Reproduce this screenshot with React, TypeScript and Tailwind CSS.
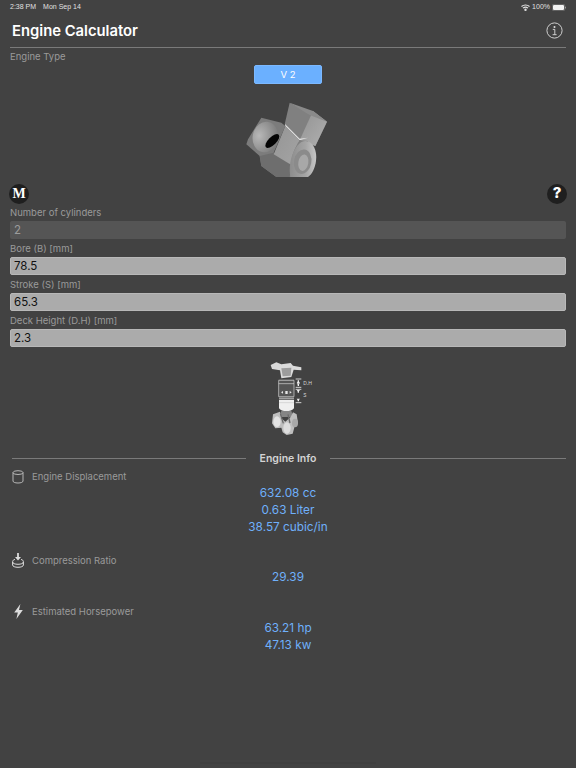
import React from "react";

function Wifi() {
  return (
    <svg width="9" height="7" viewBox="0 0 18 14" fill="none" stroke="#e5e5e5" strokeWidth="2.4">
      <path d="M1 5c4.5-4 11.5-4 16 0" />
      <path d="M4 8.2c3-2.6 7-2.6 10 0" />
      <path d="M7 11c1.2-1 2.8-1 4 0" />
      <circle cx="9" cy="12.4" r="0.8" fill="#e5e5e5" />
    </svg>
  );
}

function Battery() {
  return (
    <svg width="14" height="7" viewBox="0 0 14 7">
      <rect x="0.25" y="0.25" width="12.5" height="6.5" rx="1.6" fill="none" stroke="#9a9a9a" strokeWidth="0.5" />
      <rect x="1" y="1" width="11" height="5" rx="1" fill="#f2f2f2" />
      <rect x="13" y="2.4" width="1" height="2.2" rx="0.5" fill="#9a9a9a" />
    </svg>
  );
}

function EngineImage() {
  return (
    <svg width="120" height="100" viewBox="0 0 360 300" className="block">
      <defs>
        <radialGradient id="bore" cx="0.25" cy="0.5" r="0.85">
          <stop offset="0" stopColor="#b8b8b8" />
          <stop offset="1" stopColor="#747474" />
        </radialGradient>
        <linearGradient id="rightf" x1="0" y1="0" x2="1" y2="1">
          <stop offset="0" stopColor="#929292" />
          <stop offset="1" stopColor="#b0b0b0" />
        </linearGradient>
        <linearGradient id="frontf" x1="0" y1="0" x2="1" y2="1">
          <stop offset="0" stopColor="#959595" />
          <stop offset="1" stopColor="#a4a4a4" />
        </linearGradient>
        <linearGradient id="flange" x1="0" y1="0" x2="1" y2="0">
          <stop offset="0" stopColor="#8c8c8c" />
          <stop offset="0.6" stopColor="#a5a5a5" />
          <stop offset="1" stopColor="#c6c6c6" />
        </linearGradient>
      </defs>
      <path d="M100 80L160 95L172 105L137 185L190 222L185 258H145L100 225L95 195L55 160L60 145Z" fill="#7c7c7c" />
      <path d="M95 195L137 185L190 222L185 258H145L100 225Z" fill="#6e6e6e" />
      <ellipse cx="112" cy="138" rx="38" ry="46" transform="rotate(12 112 138)" fill="url(#bore)" />
      <ellipse cx="133" cy="150" rx="12" ry="27" transform="rotate(45 133 150)" fill="#050505" />
      <path d="M185 35L297 92L262 165L215 148L170 100Z" fill="#808080" />
      <path d="M255 60L297 92L262 165L215 148Z" fill="url(#rightf)" />
      <path d="M185 35L255 60L297 92L245 72Z" fill="#8a8a8a" />
      <path d="M172 105L215 148L190 222L137 190Z" fill="url(#frontf)" />
      <path d="M171 99L215 143L240 140L215 148L172 105Z" fill="#e4e4e4" />
      <path d="M215 148C200 170 188 200 190 222L185 258H240V150Z" fill="#808080" />
      <path d="M187 258C178 205 205 150 232 150C256 150 268 180 264 210C261 232 252 250 240 258Z" fill="url(#flange)" />
      <ellipse cx="224" cy="212" rx="26" ry="37" transform="rotate(10 224 212)" fill="#8b8b8b" />
      <ellipse cx="226" cy="215" rx="15" ry="25" transform="rotate(10 226 215)" fill="#a8a8a8" />
    </svg>
  );
}

function Diagram() {
  return (
    <svg width="80" height="85" viewBox="0 0 240 255" className="block">
      <path d="M68 30L85 22L100 28L128 24L135 32L160 37V46L137 44L130 66L100 70L96 46L72 42Z" fill="#dadada" />
      <path d="M100 40L130 38L128 62L104 64Z" fill="#9c9c9c" />
      <path d="M92 72H138V125H92Z" fill="#555555" />
      <path d="M92 76H138M92 86H138M92 125H138M92 76V125M138 76V125" stroke="#d8d8d8" strokeWidth="2" />
      <path d="M99 112L105 108V116ZM131 112L125 108V116Z" fill="#e6e6e6" />
      <rect x="112" y="108" width="7" height="9" fill="#e6e6e6" />
      <rect x="93" y="128" width="45" height="3" fill="#cfcfcf" />
      <path d="M93 134H138V160C130 172 100 172 93 160Z" fill="#efefef" />
      <path d="M93 143H138" stroke="#bdbdbd" strokeWidth="1.5" />
      <path d="M100 168H130L136 186H94Z" fill="#858585" />
      <path d="M75 178L96 170L100 190L112 200L128 186L135 172L146 178L150 205L140 214L134 236L116 240L104 232L100 218L82 220L72 205Z" fill="#bebebe" />
      <ellipse cx="87" cy="200" rx="11" ry="16" fill="#e3e3e3" />
      <ellipse cx="117" cy="219" rx="11" ry="17" fill="#dedede" />
      <ellipse cx="141" cy="204" rx="9" ry="13" fill="#a8a8a8" />
      <path d="M97 176L106 205M120 178L126 204" stroke="#6b6b6b" strokeWidth="4" />
      <path d="M143 72H160M143 97H160M143 103H160M143 143H160" stroke="#f0f0f0" strokeWidth="2.5" />
      <path d="M151 76V82M151 93V87M151 107V113M151 139V132" stroke="#f0f0f0" strokeWidth="4" />
      <path d="M146 84H156L151 78ZM146 85H156L151 91ZM146 105H156L151 111ZM146 131H156L151 137Z" fill="#f0f0f0" />
      <text x="166" y="91" fontSize="15" fill="#d8d8d8" fontFamily="Inter, sans-serif">D.H</text>
      <text x="166" y="126" fontSize="15" fill="#d8d8d8" fontFamily="Inter, sans-serif">S</text>
    </svg>
  );
}

function Cylinder() {
  return (
    <svg width="12" height="14" viewBox="0 0 12 14" fill="none" stroke="#c4c4c4" strokeWidth="0.9">
      <ellipse cx="6" cy="2.6" rx="5" ry="1.9" />
      <path d="M1 2.6v8.4c0 1.2 2 2 5 2s5-.8 5-2V2.6" />
    </svg>
  );
}

function Compression() {
  return (
    <svg width="12" height="15" viewBox="0 0 12 15" fill="none" stroke="#dcdcdc" strokeWidth="1">
      <path d="M6 0v5.6" strokeWidth="1.8" />
      <path d="M3 4H9L6 7.6Z" fill="#dcdcdc" stroke="none" />
      <path d="M3 6.4C1.6 6.8.6 7.5.6 8.6v3.4c0 1.4 2.4 2.3 5.4 2.3s5.4-.9 5.4-2.3V8.6c0-1.1-1-1.8-2.4-2.2" />
      <path d="M.6 9c0 1.4 2.4 2.3 5.4 2.3s5.4-.9 5.4-2.3" />
    </svg>
  );
}

function Bolt() {
  return (
    <svg width="9" height="15" viewBox="0 0 9 15">
      <path d="M6.4 0L0.2 8.4H3.8L2.4 15L8.8 6H5Z" fill="#dcdcdc" />
    </svg>
  );
}

function Field({ label, value, disabled }: { label: string; value: string; disabled?: boolean }) {
  return (
    <div>
      <div className="h-[18px] pt-[1px] text-[9.5px] leading-[17px] text-[#9a9a9a]">{label}</div>
      <div
        className={
          disabled
            ? "h-[18px] rounded-[2px] bg-[#555555] pl-[4px] text-[11.5px] leading-[18px] text-[#9c9c9c]"
            : "h-[18px] rounded-[2px] border border-[#b8b8b8] bg-[#ababab] pl-[3px] text-[11.5px] leading-[16px] text-[#111111]"
        }
      >
        {value}
      </div>
    </div>
  );
}

function InfoRow({ icon, label, values, className }: { icon: React.ReactNode; label: string; values: string[]; className: string }) {
  return (
    <div className={className}>
      <div className="flex h-[16px] items-center pl-[2px]">
        <span className="flex w-[12px] justify-center">{icon}</span>
        <span className="ml-[8px] pt-[1px] text-[9.5px] text-[#9a9a9a]">{label}</span>
      </div>
      <div className="text-center text-[11.8px] leading-[17px] text-[#6fb0fb]">
        {values.map((v) => (
          <div key={v}>{v}</div>
        ))}
      </div>
    </div>
  );
}

export default function App() {
  return (
    <div className="h-[768px] w-[576px] overflow-hidden bg-[#424242] font-['Inter',sans-serif]">
      <div className="flex h-[14px] items-center justify-between px-[10px] font-['Liberation_Sans',sans-serif] text-[7px] text-[#e0e0e0]">
        <div className="flex gap-[7px]">
          <span>2:38 PM</span>
          <span>Mon Sep 14</span>
        </div>
        <div className="flex items-center gap-[2px]">
          <Wifi />
          <span>100%</span>
          <Battery />
        </div>
      </div>
      <div className="mx-[10px] flex h-[33.5px] items-center justify-between border-b border-[#7a7a7a] pl-[2px] pr-[3px] pt-[1px]">
        <span className="text-[14.8px] font-semibold text-white">Engine Calculator</span>
        <svg width="17" height="17" viewBox="0 0 17 17" fill="none" stroke="#dedede">
          <circle cx="8.5" cy="8.5" r="7.6" strokeWidth="0.9" />
          <circle cx="8.5" cy="4.9" r="1" fill="#dedede" stroke="none" />
          <path d="M6.8 7.4h2v5.2M6.6 12.7h4" strokeWidth="0.9" />
        </svg>
      </div>
      <div className="px-[10px]">
        <div className="h-[17px] text-[9.5px] leading-[17px] text-[#9a9a9a]">Engine Type</div>
        <div className="flex justify-center">
          <div className="h-[19px] w-[68px] rounded-[2px] border border-[#7cb9ff] bg-[#6bb0ff] text-center text-[9.5px] leading-[17px] text-white">
            V 2
          </div>
        </div>
        <div className="mt-[7px] flex justify-center">
          <EngineImage />
        </div>
        <div className="-mx-[1px] -mt-[7px] flex h-[20px] items-center justify-between">
          <div className="flex h-[20px] w-[20px] items-center justify-center rounded-full bg-[#1f1f1f] font-['Liberation_Serif',serif] text-[14px] font-bold text-white">
            M
          </div>
          <div className="flex h-[20px] w-[20px] items-center justify-center rounded-full bg-[#1f1f1f] text-[15px] font-extrabold text-white">
            ?
          </div>
        </div>
        <div className="-mt-[1px]">
          <Field label="Number of cylinders" value="2" disabled />
          <Field label="Bore (B) [mm]" value="78.5" />
          <Field label="Stroke (S) [mm]" value="65.3" />
          <Field label="Deck Height (D.H) [mm]" value="2.3" />
        </div>
        <div className="mt-[8px] flex justify-center">
          <Diagram />
        </div>
        <div className="mt-[11px] flex h-[16px] items-center pl-[2px]">
          <div className="h-px w-[234px] bg-[#7a7a7a]" />
          <div className="w-[84px] text-center text-[10.5px] font-semibold text-[#d4d4d4]">Engine Info</div>
          <div className="h-px flex-1 bg-[#7a7a7a]" />
        </div>
        <InfoRow className="mt-[2px]" icon={<Cylinder />} label="Engine Displacement" values={["632.08 cc", "0.63 Liter", "38.57 cubic/in"]} />
        <InfoRow className="mt-[17px]" icon={<Compression />} label="Compression Ratio" values={["29.39"]} />
        <InfoRow className="mt-[18px]" icon={<Bolt />} label="Estimated Horsepower" values={["63.21 hp", "47.13 kw"]} />
      </div>
      <div className="mx-auto mt-[108px] h-[2px] w-[176px] bg-[#3f3f3f]" />
    </div>
  );
}
